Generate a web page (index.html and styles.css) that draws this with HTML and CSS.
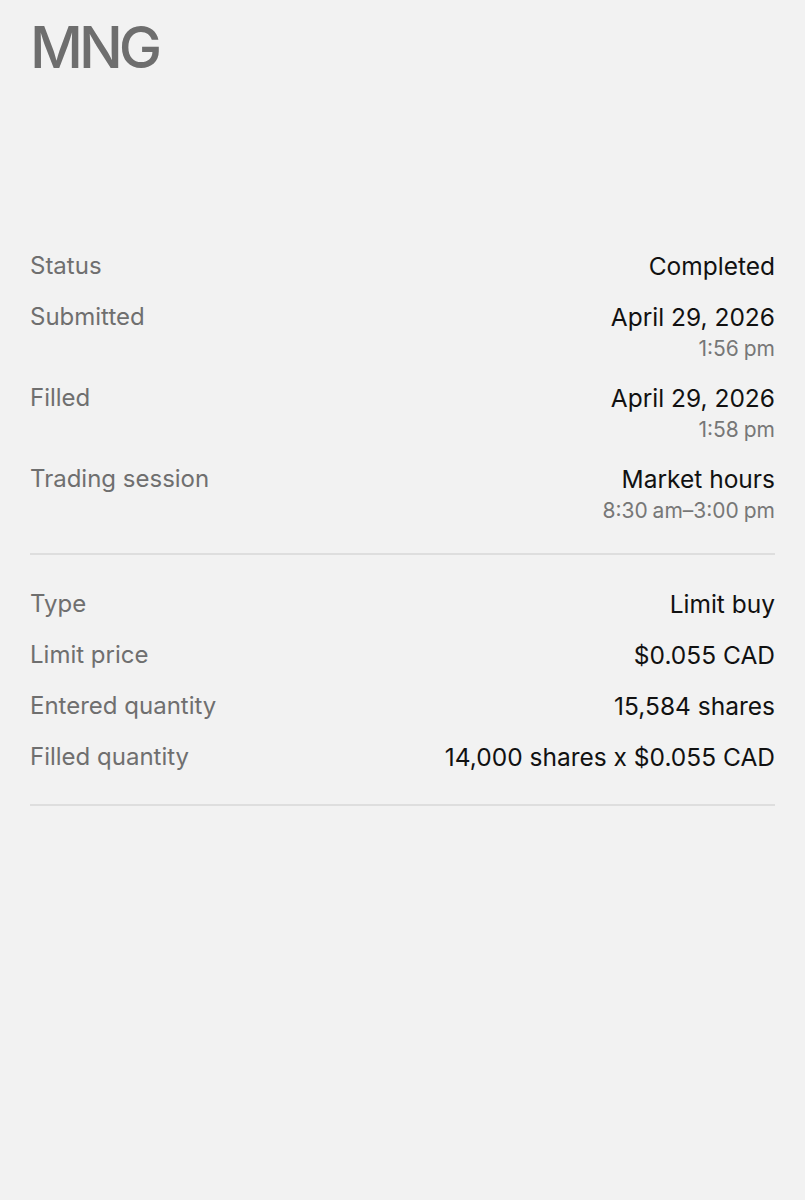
FILE: index.html
```html
<!DOCTYPE html>
<html>
<head>
<meta charset="utf-8">
<link rel="stylesheet" href="styles.css">
</head>
<body>
<main class="page">
  <h1 class="title">MNG</h1>
  <section class="group group-first">
    <div class="row"><div class="label">Status</div><div class="value"><div class="main">Completed</div></div></div>
    <div class="row"><div class="label">Submitted</div><div class="value"><div class="main">April 29, 2026</div><div class="sub">1:56 pm</div></div></div>
    <div class="row"><div class="label">Filled</div><div class="value"><div class="main">April 29, 2026</div><div class="sub">1:58 pm</div></div></div>
    <div class="row"><div class="label">Trading session</div><div class="value"><div class="main">Market hours</div><div class="sub">8:30 am–3:00 pm</div></div></div>
  </section>
  <section class="group group-second">
    <div class="row"><div class="label">Type</div><div class="value"><div class="main">Limit buy</div></div></div>
    <div class="row"><div class="label">Limit price</div><div class="value"><div class="main">$0.055 CAD</div></div></div>
    <div class="row"><div class="label">Entered quantity</div><div class="value"><div class="main">15,584 shares</div></div></div>
    <div class="row"><div class="label">Filled quantity</div><div class="value"><div class="main">14,000 shares x $0.055 CAD</div></div></div>
  </section>
</main>
</body>
</html>
```

FILE: styles.css
```css
html, body {
  margin: 0;
  padding: 0;
  background: #f2f2f2;
}
body {
  font-family: "Inter", "Liberation Sans", sans-serif;
  color: #111111;
}
.page {
  padding: 0 30px 0 30px;
  min-height: 1200px;
  box-sizing: border-box;
}
.title {
  margin: 0;
  padding-top: 12px;
  font-size: 58px;
  line-height: 70px;
  font-weight: 500;
  color: #6e6e6e;
  letter-spacing: -4px;
}
.group {
  display: flex;
  flex-direction: column;
  gap: 19px;
  border-bottom: 2px solid #dedede;
}
.group-first {
  margin-top: 168px;
  padding-bottom: 28px;
}
.group-second {
  padding-top: 33px;
  padding-bottom: 31px;
}
.row {
  display: flex;
  justify-content: space-between;
  align-items: flex-start;
}
.label {
  font-size: 24px;
  line-height: 32px;
  color: #6f6f6f;
}
.value {
  text-align: right;
}
.main {
  font-size: 24.5px;
  line-height: 32px;
  color: #111111;
}
.sub {
  margin-top: 2px;
  font-size: 21px;
  line-height: 28px;
  color: #777777;
  word-spacing: -1px;
}
```
